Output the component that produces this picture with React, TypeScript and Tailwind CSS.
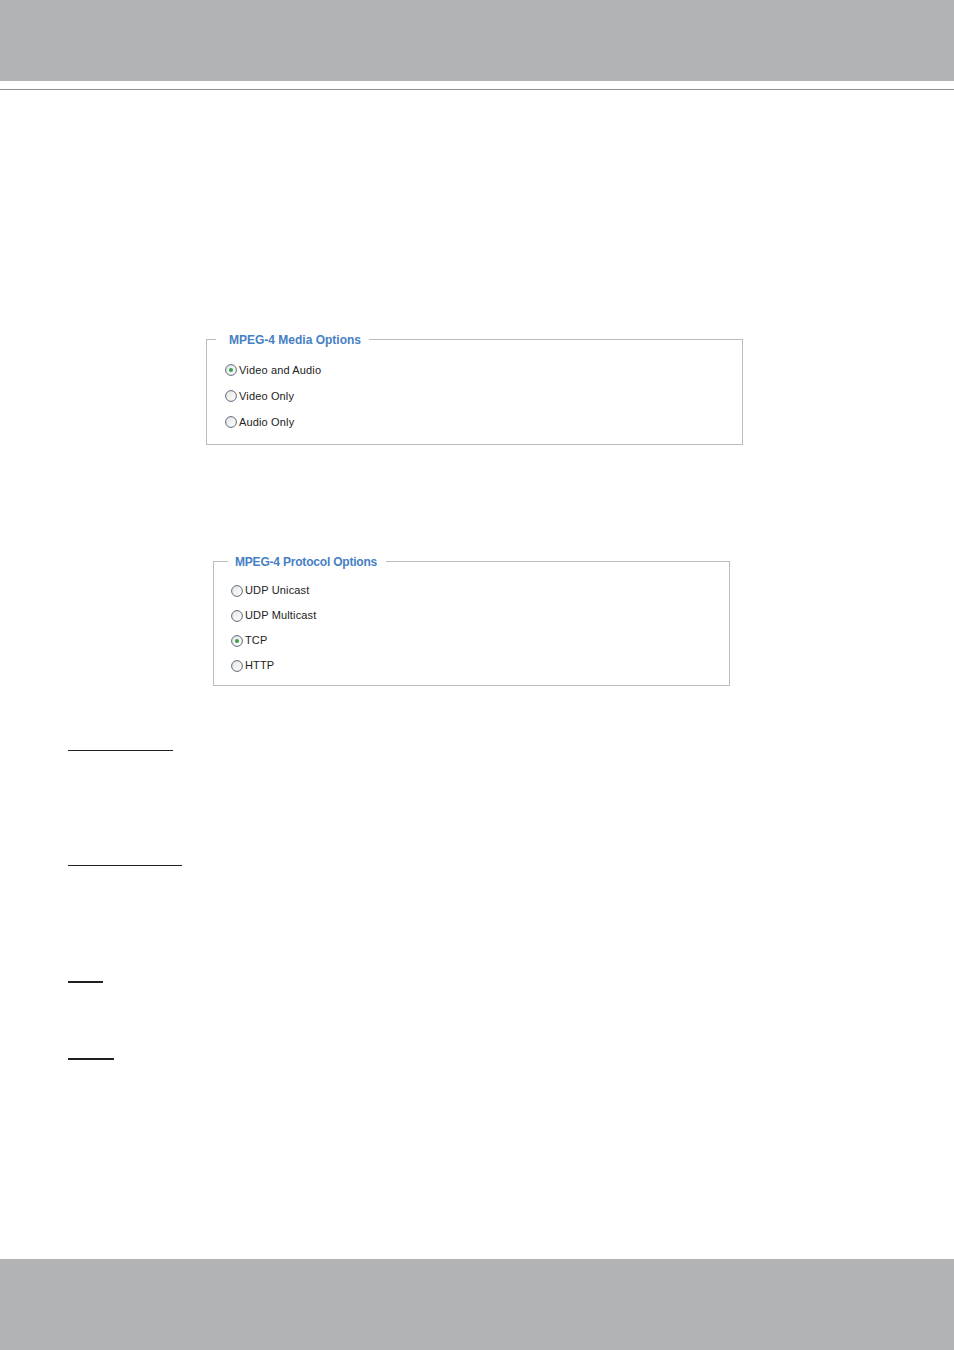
import React from 'react';

type Opt = { label: string; checked?: boolean };

const Radio: React.FC<{ checked?: boolean }> = ({ checked }) => (
  <svg width="12" height="12" viewBox="0 0 12 12" className="shrink-0">
    <defs>
      <linearGradient id="rfill" x1="0" y1="0" x2="1" y2="1">
        <stop offset="0" stopColor="#e4e4e4" />
        <stop offset="1" stopColor="#ffffff" />
      </linearGradient>
    </defs>
    <circle cx="6" cy="6" r="5.4" fill="url(#rfill)" stroke="#5d6b7b" strokeWidth="1" />
    {checked && <circle cx="6" cy="6" r="2" fill="#3aa14a" />}
  </svg>
);

const OptionBox: React.FC<{
  title: string;
  options: Opt[];
  className: string;
  legendClass: string;
  rowClass: string;
}> = ({ title, options, className, legendClass, rowClass }) => (
  <fieldset className={`border border-[#bdbcb5] ${className}`}>
    <legend className={`text-[12px] leading-[14px] font-bold text-[#4580c4] ${legendClass}`}>
      <span className="relative top-[1px]">{title}</span>
    </legend>
    <div className="flex flex-col">
      {options.map(o => (
        <div key={o.label} className={`flex items-center gap-[2px] text-[11px] text-[#222] tracking-[0.15px] ${rowClass}`}>
          <Radio checked={o.checked} />
          <span>{o.label}</span>
        </div>
      ))}
    </div>
  </fieldset>
);

export default function App() {
  return (
    <div className="w-[954px] h-[1350px] bg-white flex flex-col font-['Liberation_Sans',Arial,sans-serif]">
      <div className="h-[81px] bg-[#b2b3b5]" />
      <div className="mt-[8px] h-px bg-[#8e8e90]" />

      <OptionBox
        title="MPEG-4 Media Options"
        className="ml-[206px] mt-[242px] w-[537px] h-[113px] pl-[18px] pt-[11px]"
        legendClass="ml-[-9px] pl-[13px] pr-[8px]"
        rowClass="h-[26px]"
        options={[
          { label: 'Video and Audio', checked: true },
          { label: 'Video Only' },
          { label: 'Audio Only' },
        ]}
      />

      <OptionBox
        title="MPEG-4 Protocol Options"
        className="ml-[213px] mt-[109px] w-[517px] h-[132px] pl-[17px] pt-[10px]"
        legendClass="ml-[-3px] pl-[7px] pr-[9px] tracking-[-0.2px]"
        rowClass="h-[25px]"
        options={[
          { label: 'UDP Unicast' },
          { label: 'UDP Multicast' },
          { label: 'TCP', checked: true },
          { label: 'HTTP' },
        ]}
      />

      <div className="ml-[68px] mt-[64px] w-[105px] h-px bg-[#231f20]" />
      <div className="ml-[68px] mt-[114px] w-[114px] h-px bg-[#231f20]" />
      <div className="ml-[68px] mt-[115px] w-[35px] h-[2px] bg-[#231f20]" />
      <div className="ml-[68px] mt-[75px] w-[46px] h-[2px] bg-[#231f20]" />

      <div className="mt-auto h-[91px] bg-[#b2b3b5]" />
    </div>
  );
}
